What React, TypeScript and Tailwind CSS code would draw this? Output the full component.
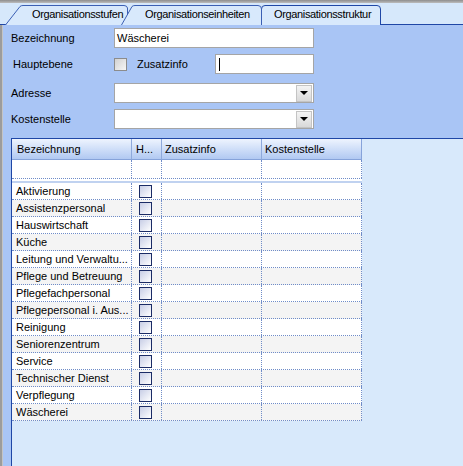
import React from 'react';

const rows = [
  'Aktivierung',
  'Assistenzpersonal',
  'Hauswirtschaft',
  'Küche',
  'Leitung und Verwaltu...',
  'Pflege und Betreuung',
  'Pflegefachpersonal',
  'Pflegepersonal i. Aus...',
  'Reinigung',
  'Seniorenzentrum',
  'Service',
  'Technischer Dienst',
  'Verpflegung',
  'Wäscherei',
];

const Tab: React.FC<{ label: string; width: number; path: string; textLeft: string; className?: string; stroke?: string }> = ({
  label,
  width,
  path,
  textLeft,
  className = '',
  stroke = '#3b5fb4',
}) => (
  <div className={`relative h-[19px] shrink-0 ${className}`} style={{ width }}>
    <svg className="absolute inset-0" width={width} height={20} viewBox={`0 0 ${width} 20`}>
      <path d={path} fill="#d8e9fc" stroke={stroke} strokeWidth={1} />
    </svg>
    <div className={`relative flex h-full items-center ${textLeft} text-[11px] tracking-[-0.35px] text-black whitespace-nowrap`}>
      {label}
    </div>
  </div>
);

const ComboBox: React.FC = () => (
  <div className="flex h-[20px] w-[200px] items-center justify-end border border-[#a5a5a5] bg-white pr-px">
    <div className="flex h-[17px] w-[16px] items-center justify-center border border-[#c4c4c4] bg-gradient-to-b from-[#f4f4f4] to-[#d9d9d9]">
      <div className="h-0 w-0 border-x-[4px] border-t-[4px] border-x-transparent border-t-black" />
    </div>
  </div>
);

const GridCheck: React.FC = () => (
  <div className="h-[13px] w-[13px] border border-[#1b2c66] bg-gradient-to-br from-[#c8cee6] to-white" />
);

export default function App() {
  return (
    <div
      className="flex h-[466px] w-[463px] flex-col overflow-hidden bg-[#a9c5f5] text-[11px] text-black"
      style={{ fontFamily: '"Liberation Sans", Arial, sans-serif' }}
    >
      {/* window top edge */}
      <div className="h-[3px] shrink-0 bg-gradient-to-b from-[#8e8e8e] to-[#bdbdbd]" />

      {/* tab strip */}
      <div className="flex h-[22px] shrink-0 items-end border-b border-[#1f47a6] bg-[#d6e8fb]">
        <Tab
          label="Organisationsstufen"
          width={123}
          className="ml-[5px]"
          textLeft="pl-[27px]"
          path="M0.5,20 L15,1.5 Q16,0.5 18,0.5 L119,0.5 Q122,0.5 122.5,3 L122.5,20"
        />
        <Tab
          label="Organisationseinheiten"
          width={141}
          className="z-10 -ml-[7px]"
          textLeft="pl-[24px]"
          path="M0.5,20 L11,1.5 Q12,0.5 14,0.5 L137,0.5 Q140.5,0.5 140.5,4 L140.5,20"
        />
        <Tab
          label="Organisationsstruktur"
          width={120}
          className="-ml-px"
          textLeft="pl-[13px]"
          stroke="#1f47a6"
          path="M0.5,20 L0.5,4 Q0.5,0.5 4,0.5 L116,0.5 Q119.5,0.5 119.5,4 L119.5,20"
        />
      </div>

      <div className="flex min-h-0 flex-1">
        {/* window left edge */}
        <div className="w-[3px] shrink-0 border-r border-[#c4c4c4] bg-[#9c9c9c]" />

        <div className="flex min-w-0 flex-1 flex-col">
          {/* form */}
          <div className="flex shrink-0 flex-col pl-[8px] pt-[3px] pb-[9px]">
            <div className="flex h-[20px] items-center">
              <div className="w-[103px]">Bezeichnung</div>
              <div className="flex h-[20px] w-[200px] items-center border border-[#a5a5a5] bg-white pl-[2px]">Wäscherei</div>
            </div>
            <div className="mt-[6px] flex h-[20px] items-center">
              <div className="w-[103px] pl-[2px]">Hauptebene</div>
              <div className="h-[13px] w-[13px] border border-[#8c8c8c] bg-gradient-to-br from-[#d2d2d2] to-[#f6f6f6]" />
              <div className="ml-[10px] w-[78px]">Zusatzinfo</div>
              <div className="flex h-[20px] w-[99px] items-center border border-[#a5a5a5] bg-white pl-[3px]">
                <div className="h-[13px] w-px bg-black" />
              </div>
            </div>
            <div className="mt-[9px] flex h-[20px] items-center">
              <div className="w-[103px]">Adresse</div>
              <ComboBox />
            </div>
            <div className="mt-[6px] flex h-[20px] items-center">
              <div className="w-[103px]">Kostenstelle</div>
              <ComboBox />
            </div>
          </div>

          {/* grid panel */}
          <div className="ml-[8px] flex-1 border-l border-t border-[#1f47a6] bg-[#d8e9fb]">
            <div className="w-[350px] bg-white">
              {/* header */}
              <div className="flex h-[21px] border-b border-r border-[#86a3da] bg-gradient-to-b from-[#eef4fe] to-[#b1c9f2]">
                <div className="flex w-[120px] items-center border-r border-[#8ea9dc] pl-[5px]">Bezeichnung</div>
                <div className="flex w-[30px] items-center border-r border-[#8ea9dc] pl-[4px]">H...</div>
                <div className="flex w-[100px] items-center border-r border-[#8ea9dc] pl-[3px]">Zusatzinfo</div>
                <div className="flex flex-1 items-center pl-[3px]">Kostenstelle</div>
              </div>
              {/* filter row */}
              <div className="flex h-[19px] border-b border-dotted border-[#6f8cc8]">
                <div className="w-[120px] border-r border-dotted border-[#6f8cc8]" />
                <div className="w-[30px] border-r border-dotted border-[#6f8cc8]" />
                <div className="w-[100px] border-r border-dotted border-[#6f8cc8]" />
                <div className="flex-1 border-r border-dotted border-[#6f8cc8]" />
              </div>
              <div className="h-[2px] bg-white" />
              <div className="h-[2px] bg-[#c0d2f0]" />
              {/* rows */}
              {rows.map((name, i) => (
                <div
                  key={name}
                  className={`flex h-[17px] border-b border-dotted border-[#6f8cc8] ${i % 2 === 0 ? 'bg-white' : 'bg-[#f4f4f4]'}`}
                >
                  <div className="flex w-[120px] items-center overflow-hidden whitespace-nowrap border-r border-dotted border-[#6f8cc8] pl-[4px] pt-px">
                    {name}
                  </div>
                  <div className="flex w-[30px] items-center border-r border-dotted border-[#6f8cc8] pl-[7px]">
                    <GridCheck />
                  </div>
                  <div className="w-[100px] border-r border-dotted border-[#6f8cc8]" />
                  <div className="flex-1 border-r border-dotted border-[#6f8cc8]" />
                </div>
              ))}
            </div>
          </div>
        </div>
      </div>
    </div>
  );
}
